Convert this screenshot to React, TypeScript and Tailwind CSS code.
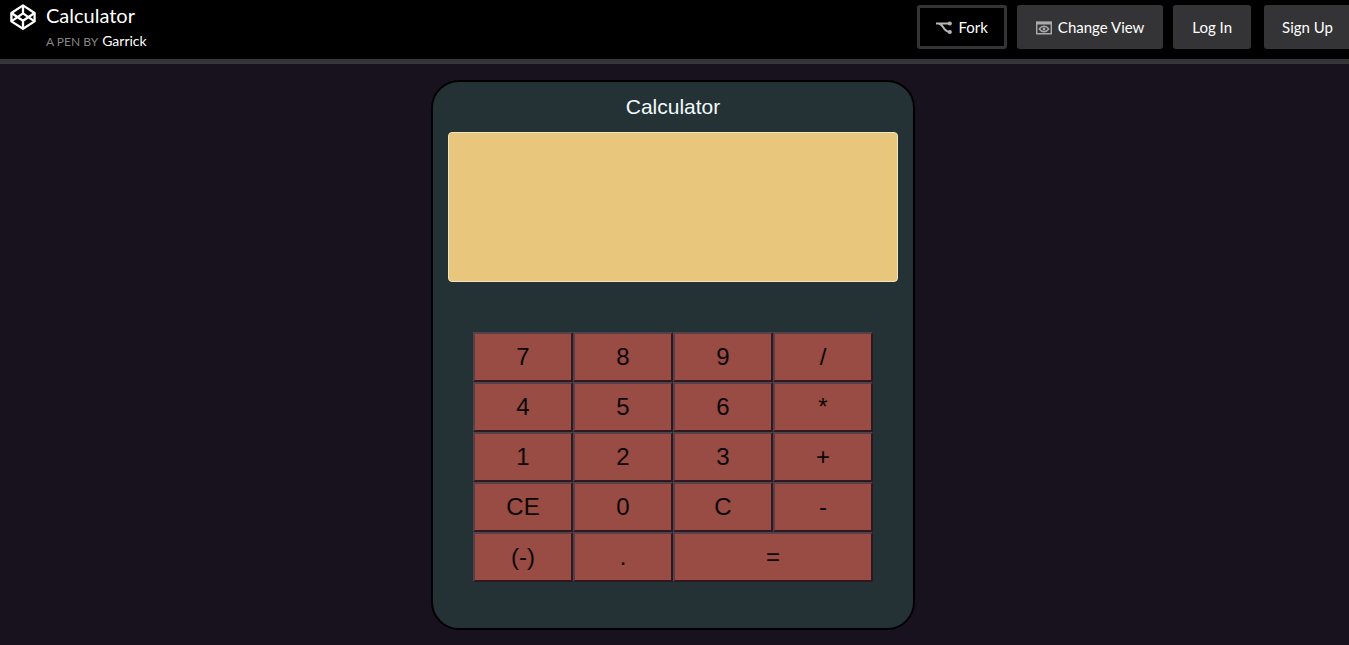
import { useState } from "react";

type Key = { label: string; wide?: boolean };

const keys: Key[] = [
  { label: "7" }, { label: "8" }, { label: "9" }, { label: "/" },
  { label: "4" }, { label: "5" }, { label: "6" }, { label: "*" },
  { label: "1" }, { label: "2" }, { label: "3" }, { label: "+" },
  { label: "CE" }, { label: "0" }, { label: "C" }, { label: "-" },
  { label: "(-)" }, { label: "." }, { label: "=", wide: true },
];

function Logo() {
  return (
    <svg className="h-[26px] w-[26px]" viewBox="0 0 26 26" fill="none" stroke="#fff" strokeWidth="2.3" strokeLinejoin="round" aria-hidden="true">
      <path d="M13 1.4 24.6 9v8.4L13 24.8 1.4 17.4V9Z" />
      <path d="M1.4 9 13 16.8 24.6 9M1.4 17.4 13 9.4l11.6 8M13 1.4v8M13 16.8v8" />
    </svg>
  );
}

function ForkIcon() {
  return (
    <svg className="h-4 w-4" viewBox="0 0 16 16" fill="none" stroke="#b5b5b5" strokeWidth="2" aria-hidden="true">
      <path d="M0 4.500h14M2.500 4.500c2.300 .2 3.300 1.500 4.700 3.700 1.600 2.700 2.800 4.500 6.500 4.800" />
      <circle cx="13.800" cy="4.500" r="2.100" fill="#b5b5b5" stroke="none" />
      <circle cx="13.800" cy="13" r="2.100" fill="#b5b5b5" stroke="none" />
    </svg>
  );
}

function ViewIcon() {
  return (
    <svg className="h-4 w-4" viewBox="0 0 16 16" fill="none" stroke="#aaa" aria-hidden="true">
      <path d="M.7 3.500h14.600v11.200H.7Z" strokeWidth="1.400" />
      <path d="M0 4h16" strokeWidth="3" />
      <path d="M3.300 10c2.500-3.600 6.900-3.600 9.400 0-2.500 3.600-6.900 3.600-9.400 0Z" strokeWidth="1.400" />
      <circle cx="8" cy="10" r="1.400" fill="#aaa" stroke="none" />
    </svg>
  );
}

const headerButton = "flex h-11 shrink-0 items-center rounded-[3px] bg-[#343436] text-[15px] text-white";

export default function App() {
  const [display, setDisplay] = useState("");

  const press = (label: string) => {
    if (label === "C" || label === "CE") setDisplay("");
    else if (label === "(-)") setDisplay((d) => (d.startsWith("-") ? d.slice(1) : "-" + d));
    else if (label !== "=") setDisplay((d) => d + label);
  };

  return (
    <div className="min-h-screen overflow-x-hidden bg-[#18121e] font-['Liberation_Sans',sans-serif]">
      <header className="flex h-16 justify-between border-b-5 border-[#353537] bg-black font-['Lato',sans-serif] text-white">
        <div className="flex gap-[10px] pt-1 pl-[10px]">
          <a href="#home" aria-label="Home" className="block">
            <Logo />
          </a>
          <div>
            <h1 className="text-xl leading-[22px]">Calculator</h1>
            <p className="flex items-baseline gap-1 pt-[5px] text-xs leading-5 text-[#858585]">
              A PEN BY
              <a href="#garrick" className="text-sm leading-5 text-white">Garrick</a>
            </p>
          </div>
        </div>
        <nav className="flex gap-[10px] pt-[5px]">
          <button className="flex h-11 shrink-0 items-center gap-[6px] rounded-[3px] border-3 border-[#343436] bg-black px-4 text-[15px]">
            <ForkIcon />
            Fork
          </button>
          <button className={headerButton + " gap-[6px] px-[19px]"}>
            <ViewIcon />
            Change View
          </button>
          <button className={headerButton + " px-[19px]"}>Log In</button>
          <button className={headerButton + " ml-[3px] rounded-r-none pr-4 pl-[18px]"}>Sign Up</button>
        </nav>
      </header>
      <main className="flex justify-center pt-4 pr-[3px] pb-[15px]">
        <section className="flex w-[484px] flex-col items-center rounded-[28px] border-2 border-black bg-[#243236] px-[15px] pt-3 pb-[46px]">
          <h2 className="text-[21px] leading-[26px] text-[#f4fafa]">Calculator</h2>
          <input
            aria-label="Display"
            readOnly
            value={display}
            className="mt-3 h-[150px] w-full rounded-[4px] border border-[#f1e3c4] bg-[#e8c67b] px-4 text-right text-4xl text-black outline-none"
          />
          <div className="mt-[50px] grid w-[400px] grid-cols-4">
            {keys.map((key) => (
              <button
                key={key.label}
                onClick={() => press(key.label)}
                className={
                  "h-[50px] border-2 border-t-[#554149] border-r-[#2f1820] border-b-[#2f1820] border-l-[#554149] bg-[#984c43] text-2xl text-[#0d0406]" +
                  (key.wide ? " col-span-2" : "")
                }
              >
                {key.label}
              </button>
            ))}
          </div>
        </section>
      </main>
    </div>
  );
}
